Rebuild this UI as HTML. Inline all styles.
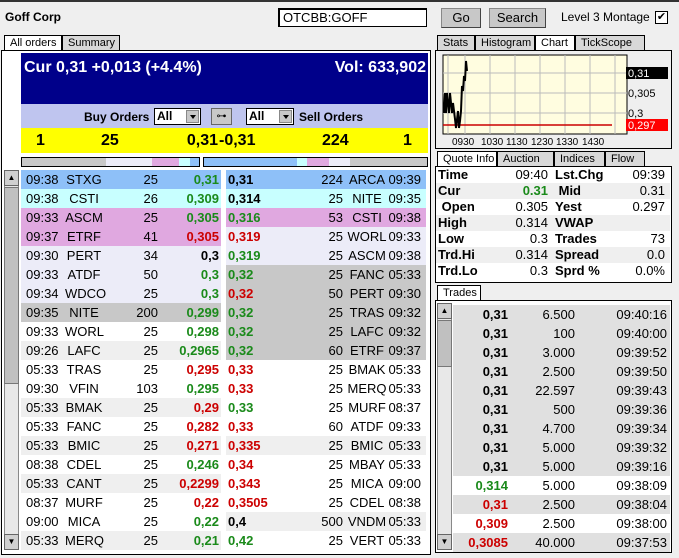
<!DOCTYPE html>
<html><head><meta charset="utf-8"><style>
*{margin:0;padding:0;box-sizing:border-box}
body{width:679px;height:558px;background:#efefef;font-family:"Liberation Sans",sans-serif;font-size:13px;color:#000;position:relative;overflow:hidden}
.a{position:absolute;white-space:nowrap}
.tab{position:absolute;height:15px;border:1px solid #000;border-bottom:none;font-size:11px;line-height:14px;padding-left:5px;background:#d8d8d8;white-space:nowrap;overflow:hidden}
.tab.on{background:#fff}
.btn{position:absolute;background:#c8c8c8;border:1px solid #888;border-right-color:#444;border-bottom-color:#444;font-size:13px;text-align:center;line-height:18px}
.row{position:absolute;height:19px;line-height:19px;font-size:13px;white-space:nowrap}
.r{position:absolute;text-align:right}
.g{color:#1a8a1a;font-weight:bold}.rd{color:#cc0000;font-weight:bold}.b{font-weight:bold}
.sel{position:absolute;background:#fff;border:1px solid #000;height:17px;font-weight:bold;font-size:12px;line-height:15px;padding-left:2px}
.sel i{position:absolute;right:1px;top:1px;width:13px;height:13px;background:#c8c8c8;border:1px solid #888}
.sel i:after{content:"";position:absolute;left:3px;top:4px;border-left:3px solid transparent;border-right:3px solid transparent;border-top:4px solid #000}
.q{position:absolute;height:16px;line-height:16px;width:234px;left:436px;font-size:13px}
</style></head><body>
<div class="a" style="left:0;top:0;width:679px;height:2px;background:#333"></div>
<div class="a b" style="left:5px;top:10px;font-size:12px">Goff Corp</div>
<div class="a" style="left:278px;top:8px;width:149px;height:19px;background:#fff;border:1px solid #000;border-top-width:2px;border-left-width:2px;padding-left:3px;line-height:15px;font-size:13px">OTCBB:GOFF</div>
<div class="btn" style="left:441px;top:8px;width:40px;height:20px">Go</div>
<div class="btn" style="left:489px;top:8px;width:57px;height:20px">Search</div>
<div class="a" style="left:561px;top:10px;font-size:12px">Level 3 Montage</div>
<div class="a" style="left:655px;top:11px;width:13px;height:13px;background:#fff;border:1px solid #000;font-size:11px;line-height:11px;text-align:center">✔</div>

<div class="tab on" style="left:4px;top:35px;width:58px">All orders</div>
<div class="tab" style="left:62px;top:35px;width:58px">Summary</div>

<div class="a" style="left:1px;top:50px;width:430px;height:505px;border:1px solid #000;background:#fff"></div>
<div class="a" style="left:21px;top:53px;width:407px;height:51px;background:#00008a"></div>
<div class="a b" style="left:24px;top:59px;color:#fff;font-size:16px">Cur 0,31 +0,013 (+4.4%)</div>
<div class="a b" style="right:253px;top:59px;color:#fff;font-size:16px">Vol: 633,902</div>
<div class="a" style="left:21px;top:104px;width:407px;height:24px;background:#bfc5ef"></div>
<div class="a b" style="left:84px;top:110px;font-size:12px">Buy Orders</div>
<div class="sel" style="left:154px;top:108px;width:47px">All<i></i></div>
<div class="a" style="left:211px;top:108px;width:21px;height:17px;background:#c8c8c8;border:1px solid #666;font-size:10px;text-align:center;line-height:15px">⊶</div>
<div class="sel" style="left:246px;top:108px;width:48px">All<i></i></div>
<div class="a b" style="left:299px;top:110px;font-size:12px">Sell Orders</div>
<div class="a" style="left:21px;top:128px;width:407px;height:25px;background:#ffff00"></div>
<div class="a b" style="left:36px;top:132px;font-size:16px">1</div>
<div class="a b" style="left:101px;top:132px;font-size:16px">25</div>
<div class="a b" style="right:461px;top:132px;font-size:16px">0,31</div>
<div class="a b" style="left:219px;top:132px;font-size:16px">-0,31</div>
<div class="a b" style="left:322px;top:132px;font-size:16px">224</div>
<div class="a b" style="left:403px;top:132px;font-size:16px">1</div>

<div class="a" style="left:21px;top:157px;width:179px;height:10px;border:1px solid #000;display:flex">
<div style="width:84px;background:#c8c8c8"></div><div style="width:46px;background:#ececf8"></div><div style="width:27px;background:#e0a8e0"></div><div style="width:11px;background:#c8ffff"></div><div style="flex:1;background:#8ec0f8"></div></div>
<div class="a" style="left:203px;top:157px;width:225px;height:10px;border:1px solid #000;display:flex">
<div style="width:93px;background:#8ec0f8"></div><div style="width:10px;background:#c8ffff"></div><div style="width:22px;background:#e0a8e0"></div><div style="width:21px;background:#ececf8"></div><div style="flex:1;background:#c8c8c8"></div></div>

<div class="a" style="left:4px;top:170px;width:15px;height:380px;background:#e8e8e8;border:1px solid #888"></div>
<div class="a" style="left:4px;top:187px;width:15px;height:197px;background:#c0c0c0;border:1px solid #777"></div>
<div class="a" style="left:4px;top:170px;width:15px;height:16px;background:#d0d0d0;border:1px solid #666;font-size:8px;text-align:center;line-height:13px">▲</div>
<div class="a" style="left:4px;top:534px;width:15px;height:16px;background:#d0d0d0;border:1px solid #666;font-size:8px;text-align:center;line-height:14px">▼</div>

<div id="rows"></div>
<script>
var L=[["09:38","STXG","25","0,31","g","#8ec0f8"],["09:38","CSTI","26","0,309","g","#c8ffff"],["09:33","ASCM","25","0,305","g","#e0a8e0"],["09:37","ETRF","41","0,305","rd","#e0a8e0"],["09:30","PERT","34","0,3","b","#ececf8"],["09:33","ATDF","50","0,3","g","#ececf8"],["09:34","WDCO","25","0,3","g","#ececf8"],["09:35","NITE","200","0,299","g","#c8c8c8"],["09:33","WORL","25","0,298","g","#fff"],["09:26","LAFC","25","0,2965","g","#efefef"],["05:33","TRAS","25","0,295","rd","#fff"],["09:30","VFIN","103","0,295","g","#fff"],["05:33","BMAK","25","0,29","rd","#efefef"],["05:33","FANC","25","0,282","rd","#fff"],["05:33","BMIC","25","0,271","rd","#efefef"],["08:38","CDEL","25","0,246","g","#fff"],["05:33","CANT","25","0,2299","rd","#efefef"],["08:37","MURF","25","0,22","rd","#fff"],["09:00","MICA","25","0,22","g","#fff"],["05:33","MERQ","25","0,21","g","#efefef"]];
var R=[["0,31","b","224","ARCA","09:39","#8ec0f8"],["0,314","b","25","NITE","09:35","#c8ffff"],["0,316","g","53","CSTI","09:38","#e0a8e0"],["0,319","rd","25","WORL","09:33","#ececf8"],["0,319","g","25","ASCM","09:38","#ececf8"],["0,32","g","25","FANC","05:33","#c8c8c8"],["0,32","rd","50","PERT","09:30","#c8c8c8"],["0,32","g","25","TRAS","09:32","#c8c8c8"],["0,32","g","25","LAFC","09:32","#c8c8c8"],["0,32","g","60","ETRF","09:37","#c8c8c8"],["0,33","rd","25","BMAK","05:33","#fff"],["0,33","rd","25","MERQ","05:33","#fff"],["0,33","g","25","MURF","08:37","#fff"],["0,33","rd","60","ATDF","09:33","#fff"],["0,335","rd","25","BMIC","05:33","#efefef"],["0,34","rd","25","MBAY","05:33","#fff"],["0,343","rd","25","MICA","09:00","#fff"],["0,3505","rd","25","CDEL","08:38","#fff"],["0,4","b","500","VNDM","05:33","#efefef"],["0,42","g","25","VERT","05:33","#fff"]];
var h="";
for(var i=0;i<20;i++){var y=170+i*19,l=L[i],r=R[i];
h+='<div class="row" style="left:21px;top:'+y+'px;width:200px;background:'+l[5]+'"><span class="a" style="left:5px">'+l[0]+'</span><span class="a" style="left:44px;width:38px;text-align:center">'+l[1]+'</span><span class="r" style="right:63px">'+l[2]+'</span><span class="r '+l[4]+'" style="right:2px">'+l[3]+'</span></div>';
h+='<div class="row" style="left:226px;top:'+y+'px;width:200px;background:'+r[5]+'"><span class="a '+r[1]+'" style="left:2px">'+r[0]+'</span><span class="r" style="right:83px">'+r[2]+'</span><span class="a" style="left:121px;width:40px;text-align:center">'+r[3]+'</span><span class="r" style="right:5px">'+r[4]+'</span></div>';}
document.getElementById("rows").innerHTML=h;
</script>

<div class="tab" style="left:437px;top:35px;width:38px">Stats</div>
<div class="tab" style="left:475px;top:35px;width:60px">Histogram</div>
<div class="tab on" style="left:535px;top:35px;width:40px">Chart</div>
<div class="tab" style="left:575px;top:35px;width:70px">TickScope</div>
<div class="a" style="left:435px;top:50px;width:237px;height:99px;border:1px solid #000;background:#efefef"></div>
<svg class="a" style="left:436px;top:51px" width="235" height="97">
<rect x="7" y="4" width="184" height="79" fill="#fffde0" stroke="#000"/>
<g stroke="#bbb" stroke-width="1">
<line x1="12" y1="4" x2="12" y2="83"/><line x1="29" y1="4" x2="29" y2="83"/><line x1="54" y1="4" x2="54" y2="83"/><line x1="79" y1="4" x2="79" y2="83"/><line x1="104" y1="4" x2="104" y2="83"/><line x1="129" y1="4" x2="129" y2="83"/><line x1="154" y1="4" x2="154" y2="83"/><line x1="179" y1="4" x2="179" y2="83"/>
<line x1="7" y1="22" x2="191" y2="22"/><line x1="7" y1="42" x2="191" y2="42"/><line x1="7" y1="62" x2="191" y2="62"/></g>
<line x1="7" y1="74" x2="176" y2="74" stroke="#c00" stroke-width="1.5"/>
<polyline points="8,62 9,42 10,62 11,42 13,62 14,42 16,62 17,52 19,68 20,77 22,60 23,77 24,70 25,60 26,35 27,40 28,25 29,30 30,10 31,20" fill="none" stroke="#000" stroke-width="2"/>
<rect x="190" y="16" width="42" height="12" fill="#000"/><text x="192" y="26" fill="#fff" font-size="11" font-family="Liberation Sans">0,31</text>
<text x="192" y="46" font-size="11" font-family="Liberation Sans">0,305</text>
<text x="192" y="66" font-size="11" font-family="Liberation Sans">0,3</text>
<rect x="190" y="68" width="42" height="12" fill="#f00"/><text x="192" y="78" fill="#fff" font-size="11" font-family="Liberation Sans">0,297</text>
<g font-size="10" font-family="Liberation Sans"><text x="16" y="94">0930</text><text x="45" y="94">1030</text><text x="70" y="94">1130</text><text x="95" y="94">1230</text><text x="120" y="94">1330</text><text x="146" y="94">1430</text></g>
</svg>

<div class="tab on" style="left:437px;top:151px;width:60px">Quote Info</div>
<div class="tab" style="left:497px;top:151px;width:57px">Auction</div>
<div class="tab" style="left:554px;top:151px;width:51px">Indices</div>
<div class="tab" style="left:605px;top:151px;width:40px">Flow</div>
<div class="a" style="left:435px;top:166px;width:237px;height:117px;border:1px solid #000;background:#fff"></div>
<div id="qi"></div>
<script>
var Q=[["Time","09:40","Lst.Chg","09:39"],["Cur","0.31","&nbsp;Mid","0.31"],["&nbsp;Open","0.305","Yest","0.297"],["High","0.314","VWAP",""],["Low","0.3","Trades","73"],["Trd.Hi","0.314","Spread","0.0"],["Trd.Lo","0.3","Sprd %","0.0%"]];
var h="";for(var i=0;i<7;i++){var q=Q[i];h+='<div class="q" style="top:'+(167+i*16)+'px;background:'+(i%2?'#efefef':'#fff')+'"><span class="a b" style="left:2px">'+q[0]+'</span><span class="r'+(i==1?' g':'')+'" style="right:122px">'+q[1]+'</span><span class="a b" style="left:119px">'+q[2]+'</span><span class="r" style="right:5px">'+q[3]+'</span></div>';}
document.getElementById("qi").innerHTML=h;
</script>

<div class="tab on" style="left:437px;top:285px;width:44px">Trades</div>
<div class="a" style="left:435px;top:300px;width:237px;height:253px;border:1px solid #000;background:#fff"></div>
<div class="a" style="left:437px;top:303px;width:15px;height:247px;background:#e8e8e8;border:1px solid #888"></div>
<div class="a" style="left:437px;top:320px;width:15px;height:47px;background:#c0c0c0;border:1px solid #777"></div>
<div class="a" style="left:437px;top:303px;width:15px;height:16px;background:#d0d0d0;border:1px solid #666;font-size:8px;text-align:center;line-height:13px">▲</div>
<div class="a" style="left:437px;top:534px;width:15px;height:16px;background:#d0d0d0;border:1px solid #666;font-size:8px;text-align:center;line-height:14px">▼</div>
<div id="tr"></div>
<script>
var T=[["0,31","b","6.500","09:40:16"],["0,31","b","100","09:40:00"],["0,31","b","3.000","09:39:52"],["0,31","b","2.500","09:39:50"],["0,31","b","22.597","09:39:43"],["0,31","b","500","09:39:36"],["0,31","b","4.700","09:39:34"],["0,31","b","5.000","09:39:32"],["0,31","b","5.000","09:39:16"],["0,314","g","5.000","09:38:09"],["0,31","rd","2.500","09:38:04"],["0,309","rd","2.500","09:38:00"],["0,3085","rd","40.000","09:37:53"]];
var h="";for(var i=0;i<13;i++){var t=T[i];h+='<div class="row" style="left:453px;top:'+(305+i*19)+'px;width:217px;background:'+((i==9||i==11)?'#fff':'#e0e0e0')+'"><span class="r '+t[1]+'" style="right:162px">'+t[0]+'</span><span class="r" style="right:95px">'+t[2]+'</span><span class="r" style="right:3px">'+t[3]+'</span></div>';}
document.getElementById("tr").innerHTML=h;
</script>
</body></html>
